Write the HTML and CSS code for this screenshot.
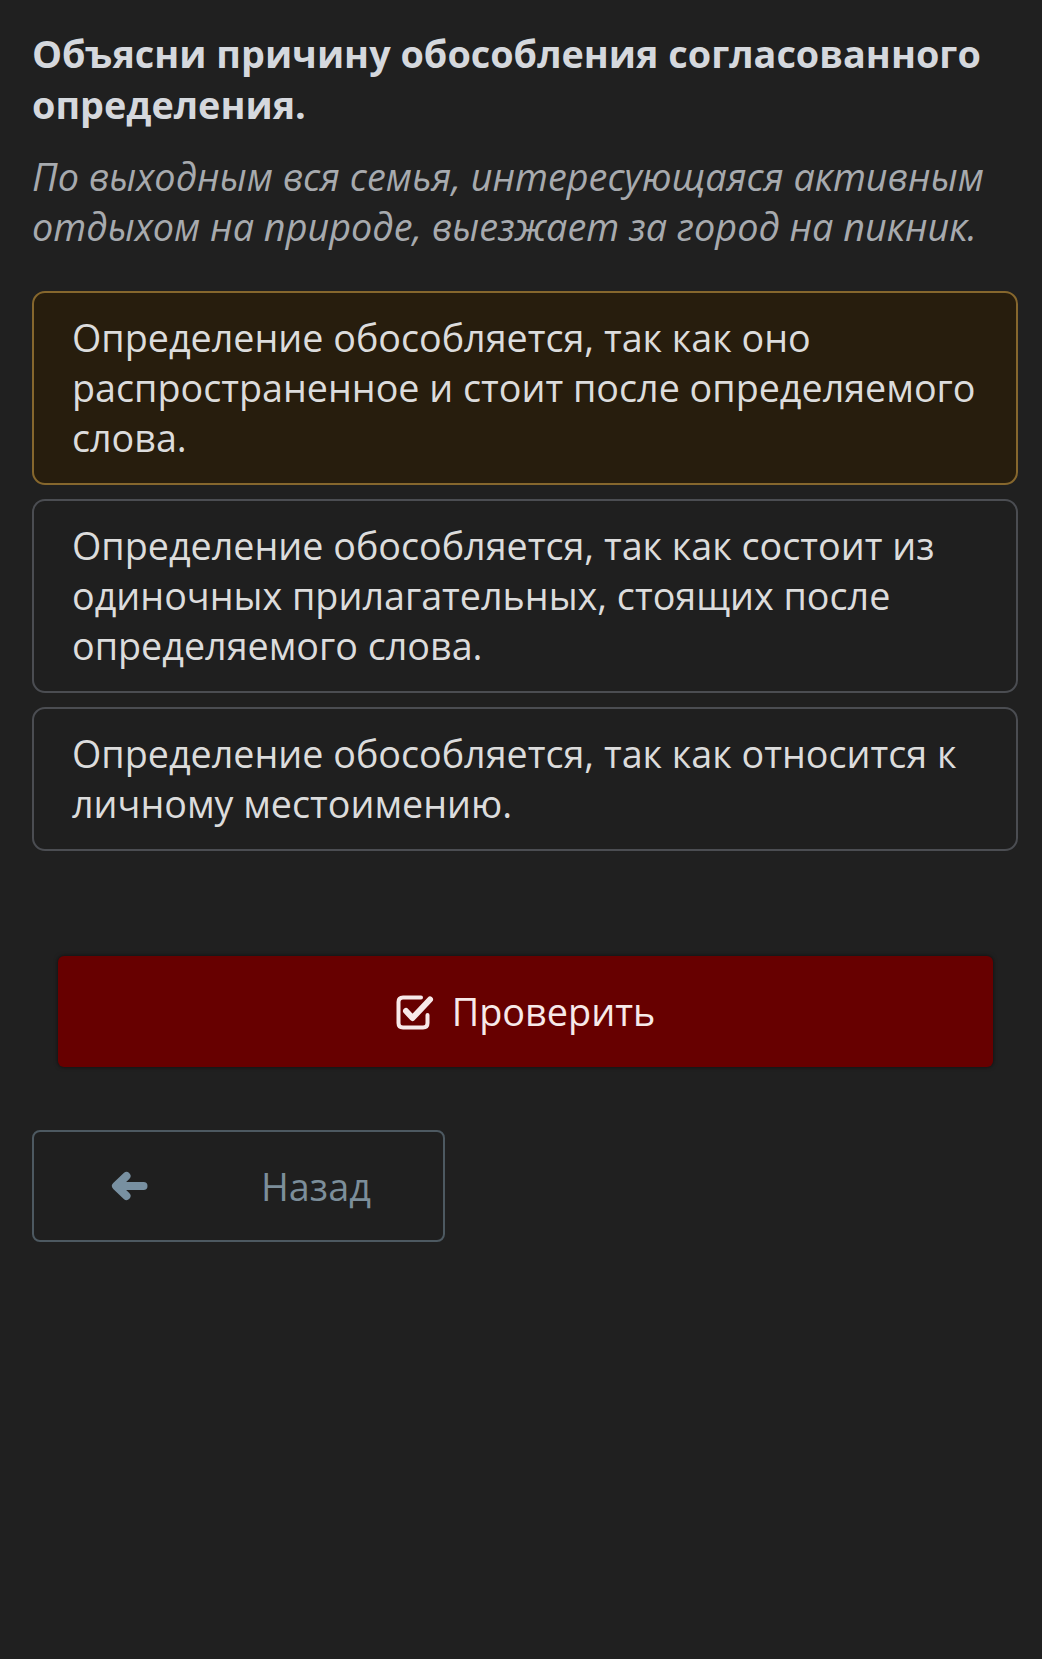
FILE: index.html
```html
<!DOCTYPE html>
<html lang="ru">
<head>
    <meta charset="UTF-8">
    <meta name="viewport" content="width=device-width, initial-scale=1.0">
    <title>Задание</title>
    <link rel="stylesheet" href="styles.css">
</head>
<body>
    <div class="page">
        <h1 class="question">Объясни причину обособления согласованного определения.</h1>
        <p class="sentence">По выходным вся семья, интересующаяся активным отдыхом на природе, выезжает за город на пикник.</p>

        <div class="options">
            <div class="option selected">Определение обособляется, так как оно распространенное и стоит после определяемого слова.</div>
            <div class="option">Определение обособляется, так как состоит из одиночных прилагательных, стоящих после определяемого слова.</div>
            <div class="option">Определение обособляется, так как относится к личному местоимению.</div>
        </div>

        <button class="check-btn">
            <svg class="check-icon" width="38" height="35" viewBox="0 0 38 35">
                <path d="M25 2.5H7Q2.5 2.5 2.5 7V28Q2.5 32.5 7 32.5H27Q31.5 32.5 31.5 28V20" fill="none" stroke="currentColor" stroke-width="4" stroke-linecap="round"/>
                <path d="M10 16L16.5 23L34 4.5" fill="none" stroke="currentColor" stroke-width="6" stroke-linecap="round" stroke-linejoin="round"/>
            </svg>
            <span>Проверить</span>
        </button>

        <button class="back-btn">
            <svg class="back-icon" width="38" height="32" viewBox="0 0 38 32">
                <path d="M33.5 16H7M16.5 6L6 16L16.5 26" fill="none" stroke="currentColor" stroke-width="8" stroke-linecap="round" stroke-linejoin="round"/>
            </svg>
            <span>Назад</span>
        </button>
    </div>
</body>
</html>
```

FILE: styles.css
```css
body {
    margin: 0;
    padding: 0;
    background-color: #202020;
    font-family: "Open Sans", "Noto Sans", sans-serif;
    color: #d9d9d9;
}

.page {
    padding: 28px 24px 0 32px;
}

.question {
    margin: 0;
    font-size: 37.8px;
    font-weight: bold;
    line-height: 51px;
    color: #d5d8dd;
}

.sentence {
    margin: 22px 0 0;
    font-size: 37.8px;
    font-style: italic;
    line-height: 50px;
    color: #a7aaae;
}

.options {
    display: flex;
    flex-direction: column;
    gap: 14px;
    margin-top: 39px;
}

.option {
    padding: 20px 30px 20px 38px;
    border: 2px solid #4b4d52;
    border-radius: 13px;
    background-color: #1f1f1f;
    font-size: 37.7px;
    line-height: 50px;
    color: #dcdcdc;
}

.option.selected {
    border-color: #86672d;
    background-color: #271d0d;
}

.check-btn {
    display: flex;
    align-items: center;
    justify-content: center;
    gap: 18px;
    width: calc(100% - 51px);
    height: 111px;
    margin: 105px 25px 0 26px;
    border: none;
    border-radius: 6px;
    background-color: #670000;
    box-shadow: 0 0 4px rgba(0, 0, 0, 0.6);
    color: #f7e9e9;
    font-family: inherit;
    font-size: 37.8px;
}

.check-icon {
    margin-top: 1px;
}

.back-btn {
    display: flex;
    align-items: center;
    gap: 113px;
    width: 413px;
    height: 112px;
    margin-top: 63px;
    padding: 0 0 0 76px;
    border: 2px solid #4d5961;
    border-radius: 8px;
    background-color: #1f1f1f;
    color: #7c8e9a;
    font-family: inherit;
    font-size: 37.8px;
}

.back-icon {
    color: #7890a1;
}
```
